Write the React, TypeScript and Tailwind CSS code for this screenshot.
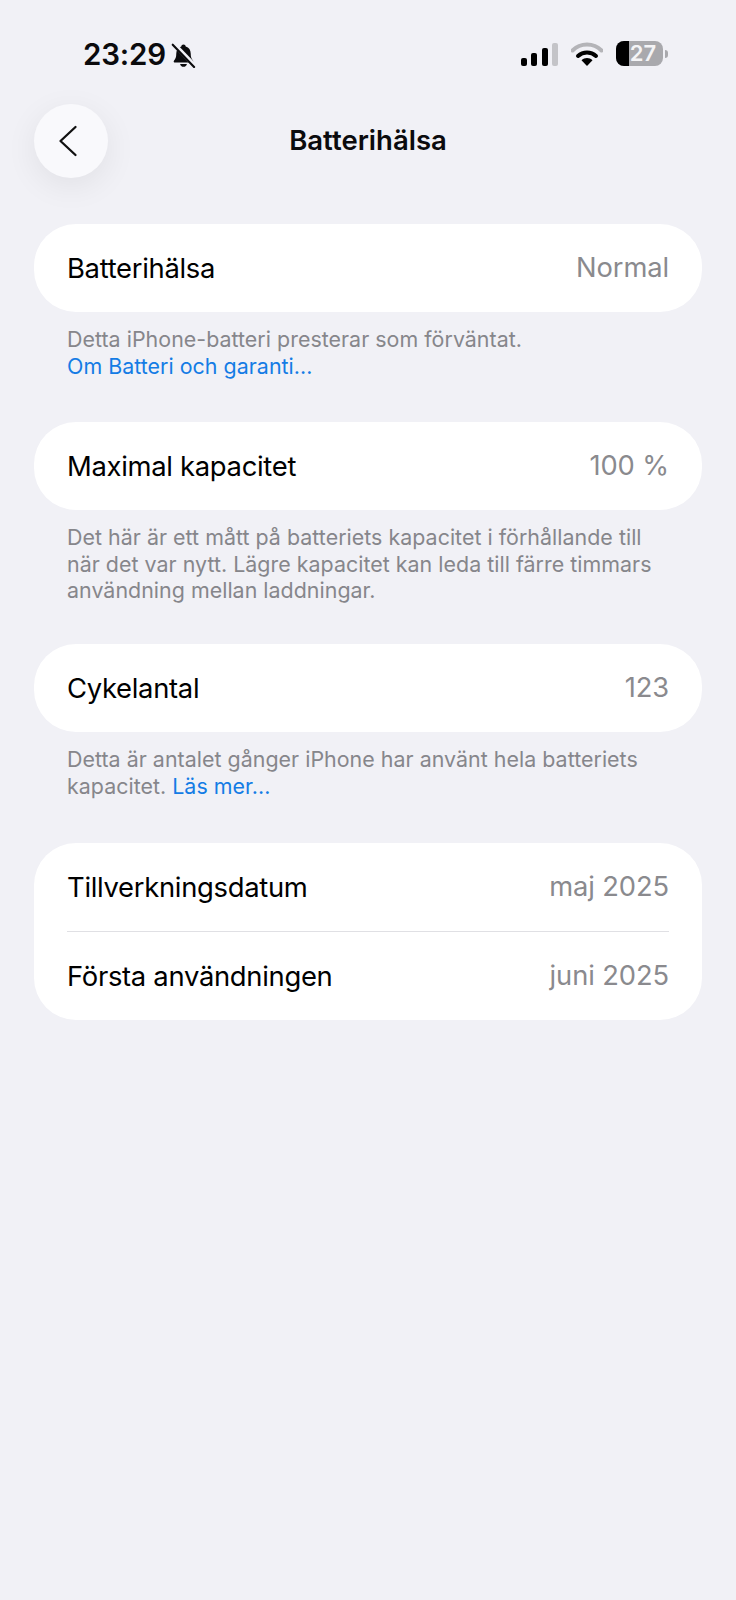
const BLUE = 'text-[#147ce5]'

function Bell() {
  return (
    <svg width="25" height="25" viewBox="0 0 26 26" className="ml-[5px]">
      <path d="M13 1.500c1.300 0 2.200.9 2.300 2.100 3.400 1 5.200 3.800 5.200 7.400 0 3.900.8 5.600 2.300 7.200.9 1 .3 2.200-1.100 2.200H4.300c-1.400 0-2-1.200-1.100-2.200 1.500-1.600 2.300-3.300 2.300-7.200 0-3.600 1.800-6.400 5.200-7.400.1-1.200 1-2.100 2.300-2.100z" fill="#0b0b0d" />
      <path d="M9.500 21.800h7c-.3 1.800-1.700 3-3.500 3s-3.200-1.200-3.500-3z" fill="#0b0b0d" />
      <path d="M3 1 L24 23" stroke="#f1f1f6" strokeWidth="4.500" />
      <path d="M1.800 1.800 L24 25" stroke="#0b0b0d" strokeWidth="2.200" strokeLinecap="round" />
    </svg>
  )
}

function Wifi() {
  return (
    <svg width="32" height="24" viewBox="0 0 32 24">
      <path d="M1.500 8.500C9.500 .5 22.500 .5 30.500 8.500" fill="none" stroke="#b4b4b8" strokeWidth="4" strokeLinecap="round" />
      <path d="M7 14C12 9.300 20 9.300 25 14" fill="none" stroke="#000" strokeWidth="4" strokeLinecap="round" />
      <path d="M16 24 L10.500 18.300C13.500 15.300 18.500 15.300 21.500 18.300z" fill="#000" />
    </svg>
  )
}

function Row({ label, value }: { label: string; value: string }) {
  return (
    <div className="flex h-[88px] items-center justify-between pt-[1px]">
      <span className="text-[27.400px] tracking-[-0.3px] text-black">{label}</span>
      <span className="text-[27.300px] tracking-[-0.1px] text-[#8a8a8e]">{value}</span>
    </div>
  )
}

function Note({ children }: { children: React.ReactNode }) {
  return (
    <p className="ml-[67px] mr-[66px] mt-[14px] text-[21.400px] leading-[26.500px] tracking-[0.03px] text-[#86868b]">
      {children}
    </p>
  )
}

function Card({ children }: { children: React.ReactNode }) {
  return <div className="rounded-[42px] bg-white px-[33px]">{children}</div>
}

export default function App() {
  return (
    <div className="h-[1600px] w-[736px] overflow-hidden bg-[#f1f1f6] font-['Inter',sans-serif]">
      {/* Statusrad */}
      <div className="flex h-[104px] items-start justify-between pl-[83px] pr-[68px] pt-[39px]">
        <div className="flex h-[32px] items-center">
          <span className="text-[29.500px] font-semibold leading-none tracking-[-0.2px] text-[#0b0b0d]">23:29</span>
          <Bell />
        </div>
        <div className="flex items-center pt-[2px]">
          <div className="flex h-[24px] items-end gap-[4.500px]">
            <div className="h-[8px] w-[6px] rounded-[2px] bg-black" />
            <div className="h-[13px] w-[6px] rounded-[2px] bg-black" />
            <div className="h-[18px] w-[6px] rounded-[2px] bg-black" />
            <div className="h-[23px] w-[6px] rounded-[2px] bg-[#c4c4c8]" />
          </div>
          <div className="ml-[13px]">
            <Wifi />
          </div>
          <div className="relative ml-[13px] h-[25px] w-[47px] rounded-[8px] bg-[#a9a9ad]">
            <div className="h-full w-[13px] rounded-l-[8px] bg-black" />
            <span className="absolute left-[12px] top-0 w-[30px] text-center text-[22px] font-semibold leading-[25px] text-[#f4f4f6]">27</span>
          </div>
          <div className="ml-[2px] h-[8px] w-[3px] rounded-r-full bg-[#a9a9ad]" />
        </div>
      </div>

      {/* Rubrik */}
      <div className="flex items-center px-[34px]">
        <button className="flex h-[74px] w-[74px] items-center justify-center rounded-full bg-[#f9f9fc] shadow-[0_8px_32px_rgba(0,0,0,0.07)]">
          <svg width="22" height="32" viewBox="0 0 22 32" className="mr-[6px]">
            <path d="M18.500 2 L3.500 16 L18.500 30" fill="none" stroke="#111" strokeWidth="2.300" strokeLinecap="round" strokeLinejoin="round" />
          </svg>
        </button>
        <h1 className="flex-1 text-center text-[27.500px] font-semibold tracking-[0px] text-[#0b0b0d]">Batterihälsa</h1>
        <div className="w-[74px]" />
      </div>

      <div className="mt-[46px]">
        <div className="px-[34px]">
          <Card>
            <Row label="Batterihälsa" value="Normal" />
          </Card>
        </div>
        <Note>
          Detta iPhone-batteri presterar som förväntat.
          <br />
          <span className={BLUE}>Om Batteri och garanti...</span>
        </Note>

        <div className="mt-[43px] px-[34px]">
          <Card>
            <Row label="Maximal kapacitet" value="100 %" />
          </Card>
        </div>
        <Note>
          Det här är ett mått på batteriets kapacitet i förhållande till när det var nytt. Lägre kapacitet kan leda till färre timmars användning mellan laddningar.
        </Note>

        <div className="mt-[40.500px] px-[34px]">
          <Card>
            <Row label="Cykelantal" value="123" />
          </Card>
        </div>
        <Note>
          Detta är antalet gånger iPhone har använt hela batteriets kapacitet. <span className={BLUE}>Läs mer...</span>
        </Note>

        <div className="mt-[44px] px-[34px]">
          <Card>
            <Row label="Tillverkningsdatum" value="maj 2025" />
            <div className="h-[1px] bg-[#e0e0e4]" />
            <Row label="Första användningen" value="juni 2025" />
          </Card>
        </div>
      </div>
    </div>
  )
}
